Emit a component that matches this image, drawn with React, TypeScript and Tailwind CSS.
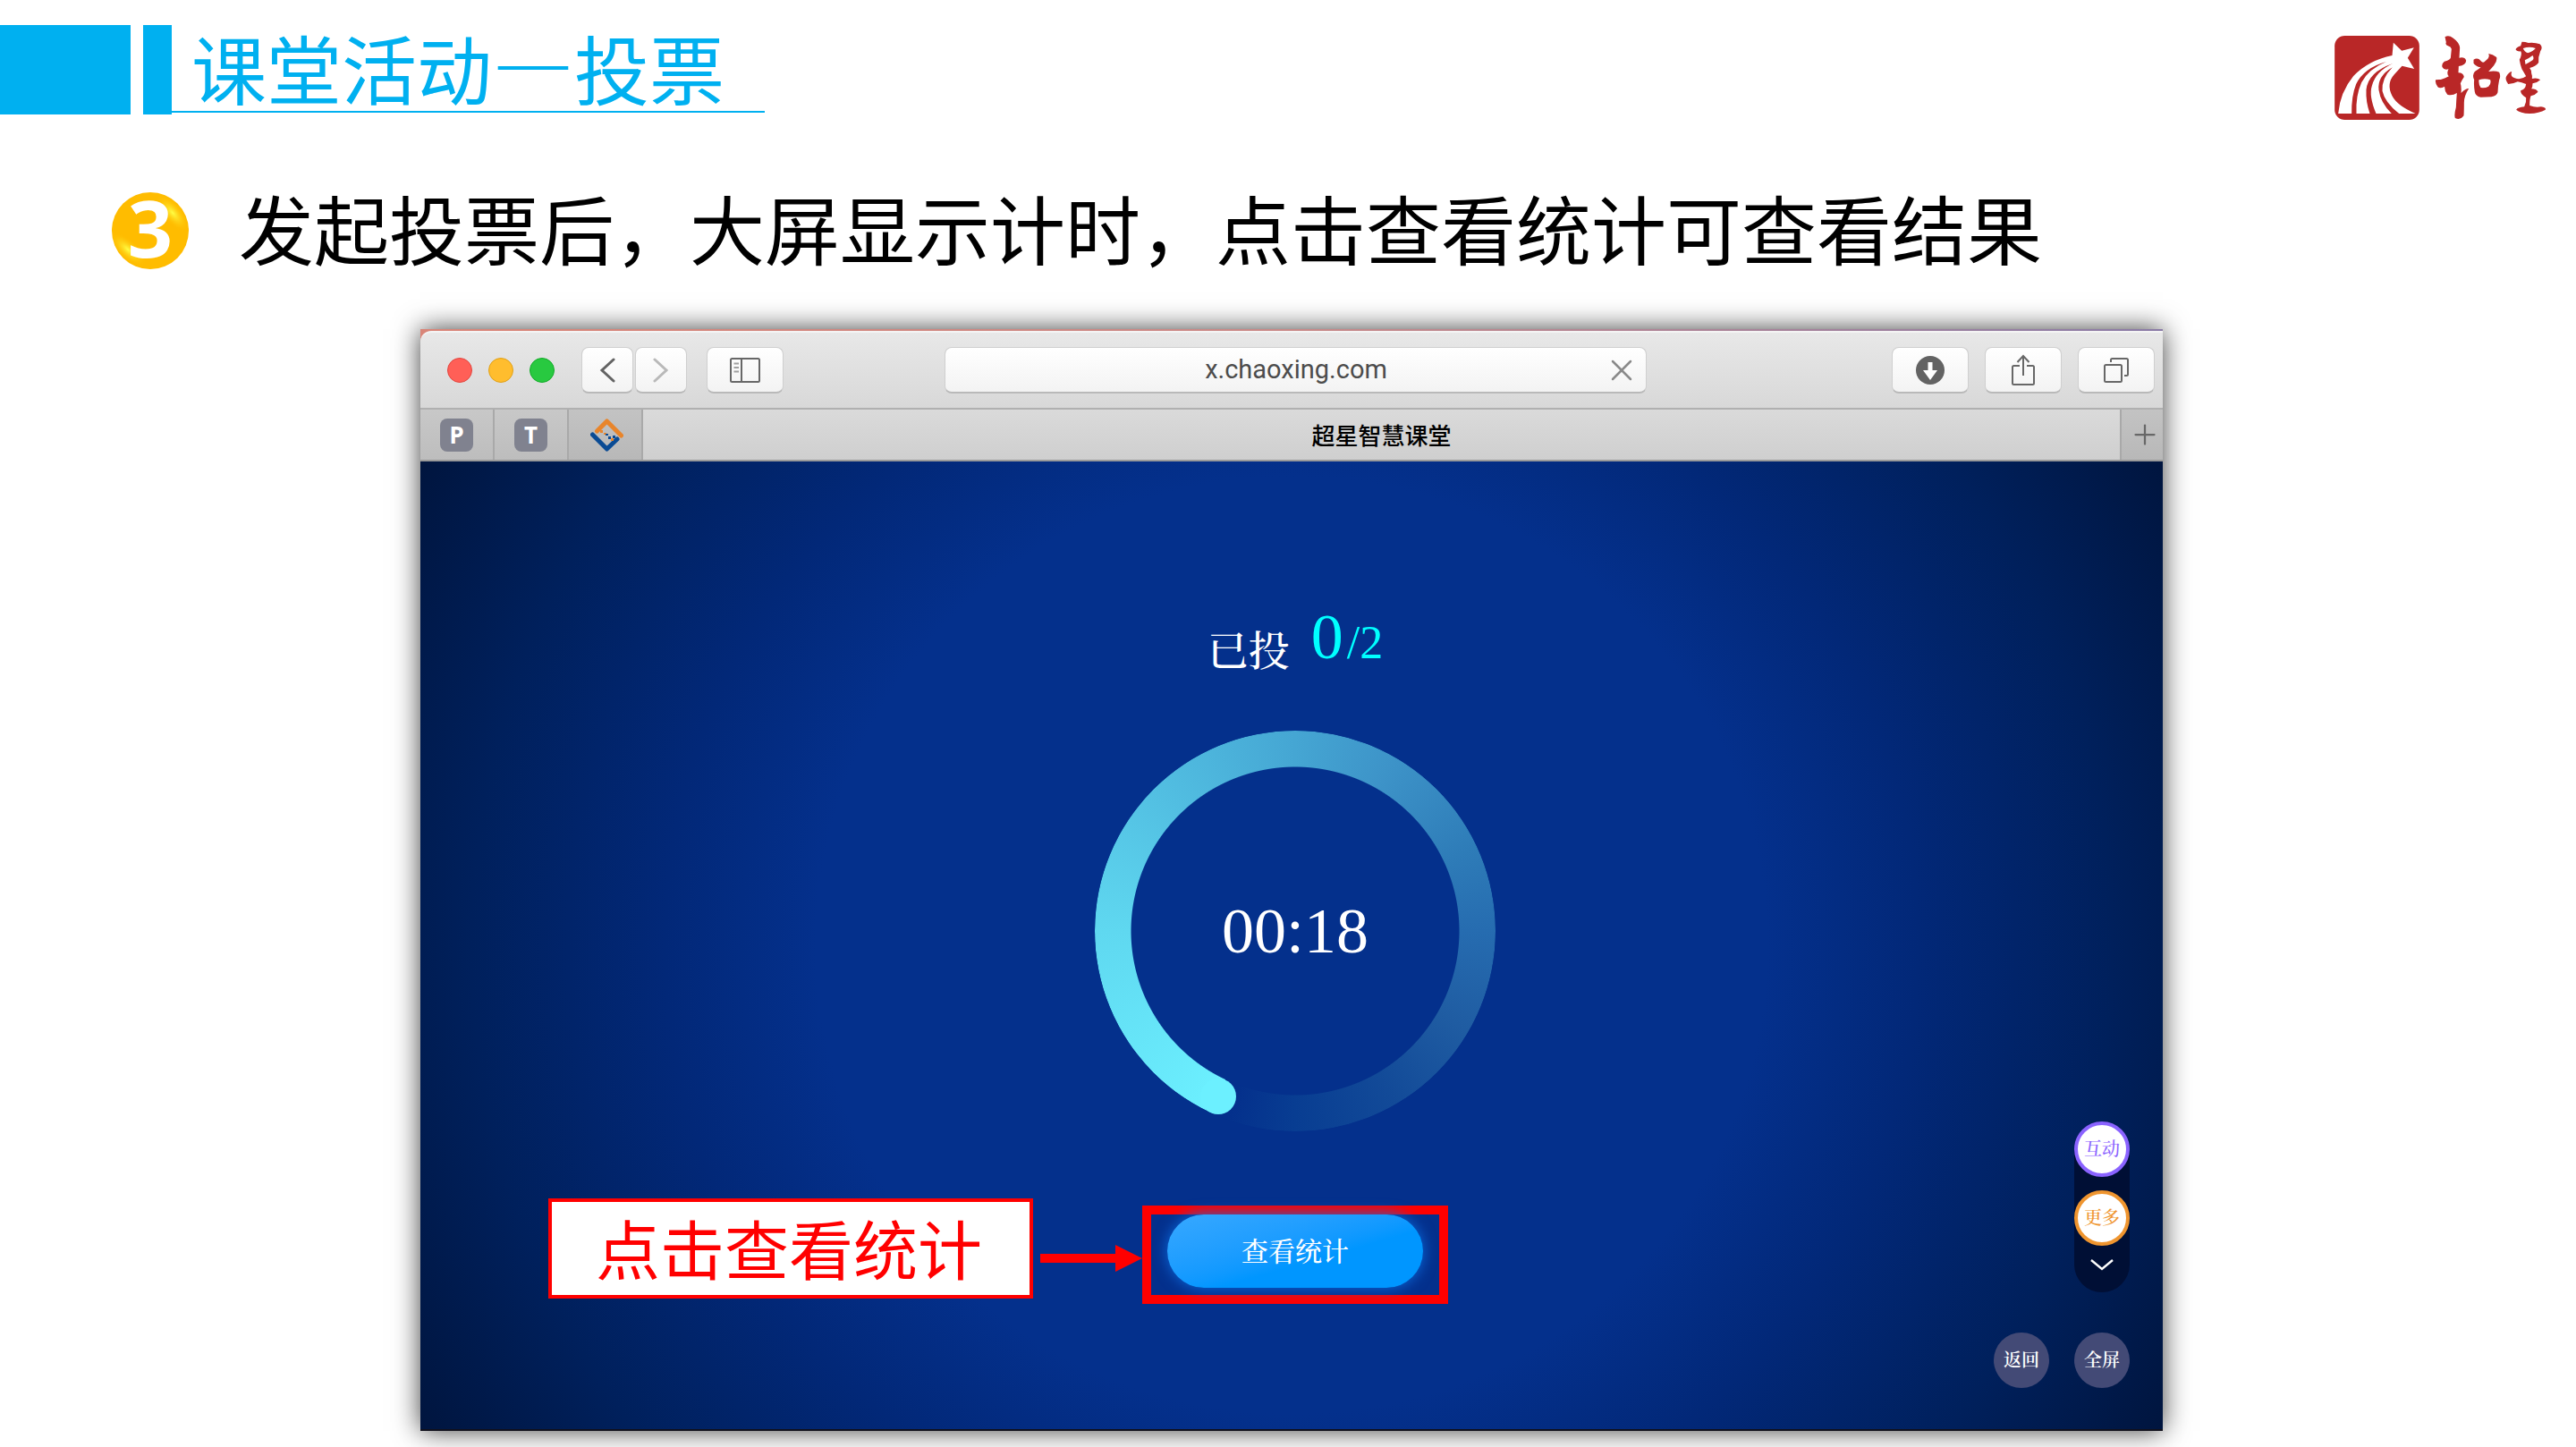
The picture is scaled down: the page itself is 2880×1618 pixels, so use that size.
import React from 'react';
import { Plus, X } from 'lucide-react';

const toolButton =
    'h-[52px] shrink-0 flex items-center justify-center rounded-lg bg-gradient-to-b from-white to-[#f3f3f3] border border-[#cfcfcf] border-b-2 border-b-[#b9b9b9]';

const pinnedTabs = ['P', 'T'];

const dockItems = [
    { label: '互动', tone: 'border-[#8a63ff] text-[#8a63ff]' },
    { label: '更多', tone: 'border-[#ef952f] text-[#ef952f] mt-[15px]' }
];

const ChaoxingLogo: React.FC = () => (
    <svg viewBox="90 60 710 282" className="w-[237px] h-[94px]" role="img" aria-label="超星">
        <rect x="90" y="60" width="284" height="282" rx="34" fill="#b92727" />
        <g fill="#fff">
            <path d="M287 83 L315 110 L356 100 L335 134 L357 171 L316 161 L290 190 Q262 221 283 262 Q300 295 361 321 L306 321 Q258 283 250 245 Q247 203 284 166 Q232 196 238 242 Q244 284 281 321 L229 321 Q204 262 215 228 Q227 180 285 153 Q202 182 196 241 Q194 282 208 321 L163 321 Q160 262 180 217 Q204 171 263 147 Q188 168 162 222 Q146 262 147 321 L102 321 Q108 250 153 195 Q204 142 283 126 Z" />
        </g>
        <g fill="#b92727">
            <path d="M460 64 Q472 56 488 68 Q508 82 510 100 L508 134 Q526 130 531 143 Q531 158 506 162 L505 184 Q522 184 524 198 Q516 210 512 220 Q516 232 514 252 Q530 236 540 237 Q524 262 524 284 Q524 312 523 328 Q512 344 494 336 Q490 326 497 300 Q498 276 500 252 Q484 262 468 257 Q458 246 459 230 Q444 238 436 232 Q426 218 429 208 Q438 206 446 207 Q462 202 473 196 Q464 186 472 172 Q456 176 451 165 Q448 154 458 146 Q476 142 479 134 L482 104 Q480 96 470 94 Q460 90 464 82 Z" />
            <path fillRule="evenodd" d="M556 140 Q570 132 580 144 Q588 154 596 144 Q612 132 606 120 Q620 122 633 132 Q636 146 624 160 Q612 174 606 180 Q628 176 642 182 Q648 196 642 208 Q638 226 637 250 Q634 262 616 265 L580 266 Q562 262 560 248 Q556 226 558 208 Q550 192 560 180 Q574 172 580 166 Q562 162 556 152 Z M574 208 Q594 202 612 208 Q616 222 606 230 Q594 236 580 234 Q572 222 574 208 Z" />
            <path fillRule="evenodd" d="M718 80 Q730 80 740 84 Q762 82 778 88 Q790 98 780 112 Q772 132 774 150 Q764 164 744 168 Q752 178 750 186 Q754 196 752 204 Q770 200 780 208 Q770 218 754 220 Q754 232 750 238 Q766 238 772 248 Q764 258 748 262 Q744 272 744 294 Q764 302 782 298 Q800 300 797 308 Q776 320 744 321 Q712 320 699 308 Q704 300 726 298 Q734 284 732 268 Q712 256 714 244 Q730 240 732 222 Q716 216 704 214 Q688 222 672 222 Q660 206 666 196 Q674 182 684 180 Q678 198 694 202 Q714 210 732 196 Q724 182 718 172 Q712 156 710 140 Q720 122 714 112 Q700 114 697 106 Q700 98 714 94 Z M722 102 Q726 114 738 118 Q756 112 764 102 Q744 94 722 102 Z M728 142 Q744 134 754 126 Q760 136 754 142 Q742 150 730 156 Z" />
        </g>
    </svg>
);

const StepBadge: React.FC = () => (
    <div className="relative w-[86px] h-[86px] shrink-0 flex items-center justify-center pb-2 rounded-full bg-[#ffbc00]">
        <svg viewBox="0 0 86 86" className="absolute inset-0 rounded-full" aria-hidden="true">
            <defs>
                <radialGradient id="shine">
                    <stop offset="0" stopColor="#ffff45" />
                    <stop offset="1" stopColor="#ffbc00" stopOpacity="0" />
                </radialGradient>
            </defs>
            <ellipse cx="68" cy="23" rx="26" ry="11" transform="rotate(50 68 23)" fill="url(#shine)" />
            <ellipse cx="18" cy="64" rx="26" ry="11" transform="rotate(42 18 64)" fill="url(#shine)" />
        </svg>
        <span className="relative font-['Open_Sans',sans-serif] text-[88px] leading-[86px] font-bold text-white">3</span>
    </div>
);

const BrowserToolbar: React.FC = () => (
    <div className="h-[88px] flex items-center pl-[30px] pr-[9px] rounded-tl-xl bg-gradient-to-b from-[#e8e8e8] to-[#d8d8d8] border-t-2 border-t-[#f4f4f4] border-b-2 border-b-[#b0b0b0]">
        <div className="flex gap-[18px] mr-[30px]">
            <span className="w-7 h-7 rounded-full bg-[#ff5f57] border border-[#e2463f]" />
            <span className="w-7 h-7 rounded-full bg-[#ffbd2e] border border-[#e1a116]" />
            <span className="w-7 h-7 rounded-full bg-[#28c940] border border-[#12ac28]" />
        </div>
        <div className="flex gap-[2px] mr-[22px]">
            <button aria-label="后退" className={`${toolButton} w-[58px]`}>
                <svg viewBox="0 0 18 30" className="w-[18px] h-[30px]" fill="none" stroke="#636363" strokeWidth="3" strokeLinecap="round"><path d="M16 3 L3 15 L16 27" /></svg>
            </button>
            <button aria-label="前进" className={`${toolButton} w-[58px]`}>
                <svg viewBox="0 0 18 30" className="w-[18px] h-[30px]" fill="none" stroke="#b9b9b9" strokeWidth="3" strokeLinecap="round"><path d="M2 3 L15 15 L2 27" /></svg>
            </button>
        </div>
        <button aria-label="边栏" className={`${toolButton} w-[86px]`}>
            <svg viewBox="0 0 36 30" className="w-9 h-[30px]" fill="none" stroke="#676767" strokeWidth="2">
                <rect x="2" y="2" width="32" height="26" rx="1.5" />
                <path d="M14 2 V28" />
                <path d="M5.5 7.5 H11 M5.5 12 H11 M5.5 16.5 H11" stroke="#a0a0a0" />
            </svg>
        </button>
        <div className={`${toolButton} flex-1 ml-[180px] mr-[274px] pr-[14px]`}>
            <input
                aria-label="网址"
                defaultValue="x.chaoxing.com"
                className="flex-1 min-w-0 pl-12 bg-transparent text-center text-[#4c4c4c] text-[29px] font-[Roboto,sans-serif] outline-none"
            />
            <button aria-label="停止"><X className="w-10 h-10 -mr-[7px] text-[#8a8a8a]" strokeWidth={1.5} /></button>
        </div>
        <div className="flex gap-[18px]">
            <button aria-label="下载" className={`${toolButton} w-[86px]`}>
                <svg viewBox="0 0 32 32" className="w-8 h-8">
                    <circle cx="16" cy="16" r="16" fill="#636363" />
                    <path d="M13.5 7 H18.5 V16 H24 L16 27 L8 16 H13.5 Z" fill="#fff" />
                </svg>
            </button>
            <button aria-label="共享" className={`${toolButton} w-[86px]`}>
                <svg viewBox="0 0 26 36" className="w-[26px] h-9" fill="none" stroke="#676767" strokeWidth="2">
                    <path d="M9 13 H2.5 Q1 13 1 14.5 V32.5 Q1 34 2.5 34 H23.5 Q25 34 25 32.5 V14.5 Q25 13 23.5 13 H17" />
                    <path d="M13 24 V2 M6.5 9 L13 2 L19.5 9" />
                </svg>
            </button>
            <button aria-label="标签页" className={`${toolButton} w-[86px]`}>
                <svg viewBox="0 0 28 28" className="w-7 h-7" fill="none" stroke="#676767" strokeWidth="2">
                    <rect x="1" y="8" width="19" height="19" rx="1.5" />
                    <path d="M8 5 V2.5 Q8 1 9.5 1 H25.5 Q27 1 27 2.5 V18.5 Q27 20 25.5 20 H23" />
                </svg>
            </button>
        </div>
    </div>
);

const TabBar: React.FC = () => (
    <div className="h-[58px] flex bg-gradient-to-b from-[#dadada] to-[#cfcfcf] border-b-2 border-b-[#9a9a9a]">
        {pinnedTabs.map(tab => (
            <button key={tab} className="w-[83px] shrink-0 flex items-center justify-center bg-gradient-to-b from-[#c8c8c8] to-[#bdbdbd] border-r-2 border-r-[#a9a9a9]">
                <span className="w-[37px] h-[37px] rounded-lg bg-[#80828f] text-white text-[26px] leading-[37px] font-bold font-['Noto_Sans',sans-serif]">{tab}</span>
            </button>
        ))}
        <button aria-label="超星" className="w-[83px] shrink-0 pl-1 flex items-center justify-center bg-gradient-to-b from-[#c3c3c3] to-[#b8b8b8] border-r-2 border-r-[#a9a9a9]">
            <svg viewBox="0 0 37 37" className="w-[37px] h-[37px]">
                <path d="M7.5 14 L18.5 3 L34.5 19" fill="none" stroke="#e8852b" strokeWidth="5" strokeLinecap="round" strokeLinejoin="round" />
                <path d="M2.5 18 L18.5 34 L30 23" fill="none" stroke="#0a4b94" strokeWidth="5" strokeLinecap="round" strokeLinejoin="round" />
                <path d="M11 13h3v3h-3z M15 16h3v2h-3z M23 22h3v3h-3z" fill="#e8852b" />
                <path d="M17 17h3v2h-3z M20 20h3v3h-3z M25 19h3v3h-3z" fill="#0a4b94" />
            </svg>
        </button>
        <button className="flex-1 text-black text-[26px] leading-[56px] font-medium">超星智慧课堂</button>
        <button aria-label="新标签页" className="w-12 shrink-0 pl-[6px] flex items-center justify-center bg-gradient-to-b from-[#c3c3c3] to-[#b8b8b8] border-l-2 border-l-[#a9a9a9]">
            <Plus className="w-9 h-9 shrink-0 text-[#676767]" strokeWidth={1.5} />
        </button>
    </div>
);

const CountdownRing: React.FC = () => (
    <div className="relative w-[448px] h-[448px] flex items-center justify-center">
        <div className="absolute inset-0 rounded-full bg-[conic-gradient(from_205deg,#6cf0ff_0deg,#5fd8f0_65deg,#52bfe2_110deg,#45a6d3_155deg,#3d93c8_185deg,#2e7cb8_220deg,#266cb0_245deg,#1f5ca2_275deg,#124a98_305deg,#083d92_335deg,#04308c_355deg,#04308c_360deg)] [mask-image:radial-gradient(circle,transparent_183px,#000_184px)]" />
        <span className="absolute left-[118px] top-[389px] w-10 h-10 rounded-full bg-[#6cf0ff]" />
        <span className="relative text-white text-[72px] leading-[72px]">00:18</span>
    </div>
);

const VotingStage: React.FC = () => (
    <div className="relative flex flex-col items-center pt-[160px] pb-[140px] pl-2 border-b-2 border-b-[#10101c] font-['Liberation_Serif','Noto_Serif_CJK_SC','Noto_Sans_CJK_SC',serif] bg-[radial-gradient(ellipse_62%_110%_at_center,#04308c_0%,#04308c_44%,#022878_58%,#00205c_76%,#00143c_94%)]">
        <div className="flex items-start h-[141px]">
            <span className="mr-6 text-white text-[46px] leading-[106px] font-medium">已投</span>
            <span className="flex items-baseline gap-1 text-[#00ffff]">
                <span className="text-[72px] leading-[72px]">0</span>
                <span className="text-[52px] leading-[72px]">/2</span>
            </span>
        </div>
        <CountdownRing />
        <div className="relative mt-[83px] px-[18px] pb-2 border-10 border-[#ff0000]">
            <button className="w-[286px] h-[82px] rounded-full text-white text-[30px] font-medium bg-gradient-to-br from-[#36a8ff] to-[#0096ff] to-60% shadow-[0_0_16px_#0a6be0]">
                查看统计
            </button>
            {/* 操作提示：文字框 + 箭头 */}
            <div className="absolute right-full -top-[18px] flex items-start">
                <div className="mr-2 pl-[49px] pr-[53px] pt-[13px] pb-[17px] border-4 border-[#ff0000] bg-white text-[#ff0000] text-[72px] leading-[74px] whitespace-nowrap font-['Noto_Sans_CJK_SC',sans-serif]">
                    点击查看统计
                </div>
                <svg viewBox="0 0 114 30" className="w-[114px] h-[30px] mt-[52px] mr-[10px]" fill="#ff0000" aria-hidden="true">
                    <path d="M0 10 H84 V0 L114 15 L84 30 V20 H0 Z" />
                </svg>
            </div>
        </div>
        <div className="absolute right-[37px] bottom-[46px] flex flex-col items-end text-[20px]">
            <div className="w-[62px] h-[191px] flex flex-col items-center rounded-full bg-[#000f35]">
                {dockItems.map(item => (
                    <button key={item.label} className={`w-[62px] h-[62px] shrink-0 rounded-full border-4 bg-white font-medium ${item.tone}`}>
                        {item.label}
                    </button>
                ))}
                <button aria-label="收起" className="mt-1 text-white">
                    <svg viewBox="0 0 26 34" className="w-[26px] h-[34px]" fill="none" stroke="currentColor" strokeWidth="2.4"><path d="M1 12 L13 22 L25 12" /></svg>
                </button>
            </div>
            <div className="mt-[45px] flex gap-7 text-white font-semibold">
                <button className="w-[62px] h-[62px] rounded-full bg-[#434a76]">返回</button>
                <button className="w-[62px] h-[62px] rounded-full bg-[#434a76]">全屏</button>
            </div>
        </div>
    </div>
);

const App: React.FC = () => {
    return (
        <main lang="zh-CN" className="min-h-screen bg-white pt-7 pb-[18px] font-['Noto_Sans_CJK_SC',sans-serif]">
            <header className="flex items-start">
                <span className="w-[146px] h-[100px] bg-[#00b0f0]" />
                <span className="ml-[14px] w-8 h-[100px] bg-[#00b0f0]" />
                <h1 className="h-[98px] pl-[22px] pr-[45px] border-b-2 border-[#00b0f0] text-[#00b0f0] text-[84px] leading-[86px] whitespace-nowrap">
                    课堂活动<span className="text-[92px] font-medium">—</span>投票
                </h1>
                <div className="ml-auto mt-3 mr-[33px]">
                    <ChaoxingLogo />
                </div>
            </header>

            <section className="mt-[74px] h-[100px] flex items-center pl-[125px]">
                <StepBadge />
                <h2 className="ml-14 pb-2 text-black text-[84px] leading-[92px] whitespace-nowrap">发起投票后，大屏显示计时，点击查看统计可查看结果</h2>
            </section>

            <section className="mt-[60px] ml-[470px] mr-[462px] shadow-[0_0_28px_rgba(0,0,0,0.75)]">
                <div className="pt-[2px] bg-gradient-to-r from-[#d98578] via-[#c98a88] to-[#8a7ba6]">
                    <BrowserToolbar />
                </div>
                <TabBar />
                <VotingStage />
            </section>
        </main>
    );
};

export default App;
